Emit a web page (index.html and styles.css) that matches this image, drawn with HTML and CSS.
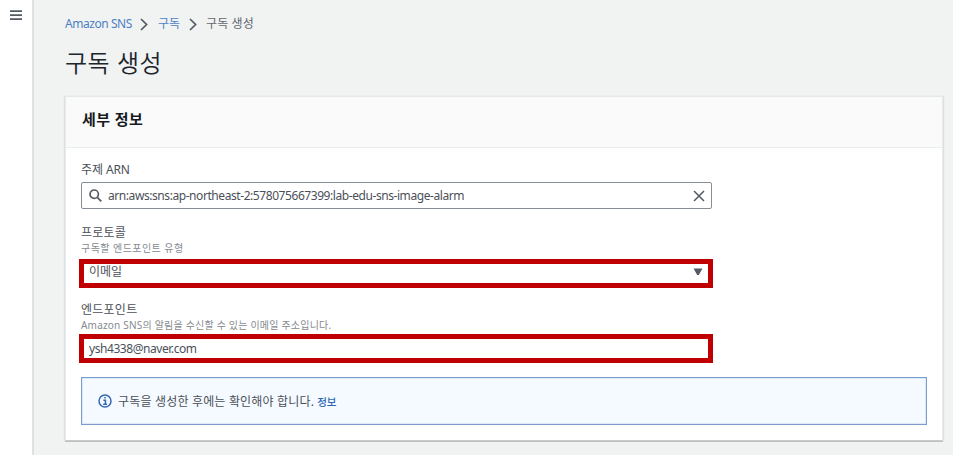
FILE: index.html
```html
<!DOCTYPE html>
<html lang="ko">
<head>
<meta charset="utf-8">
<title>구독 생성</title>
<link rel="stylesheet" href="styles.css">
</head>
<body>
<div class="app">
  <aside class="rail">
    <svg class="menu" width="12" height="11" viewBox="0 0 12 11"><path d="M0 1.1h12M0 5.1h12M0 9.1h12"/></svg>
  </aside>
  <main class="content">
    <nav class="crumbs">
      <a class="crumb crumb-root">Amazon SNS</a>
      <svg class="chevron" width="8" height="13" viewBox="0 0 8 13"><path d="M1 1l5.6 5.5L1 12"/></svg>
      <a class="crumb crumb-parent">구독</a>
      <svg class="chevron" width="8" height="13" viewBox="0 0 8 13"><path d="M1 1l5.6 5.5L1 12"/></svg>
      <span class="crumb crumb-current">구독 생성</span>
    </nav>
    <h1 class="title">구독 생성</h1>
    <section class="panel">
      <header class="panel-head"><h2>세부 정보</h2></header>
      <div class="panel-body">
        <div class="field field-arn">
          <label class="label label-arn">주제 ARN</label>
          <div class="search">
            <svg class="glass" width="13" height="13" viewBox="0 0 13 13"><circle cx="5.2" cy="5.2" r="4.2"/><path d="M8.3 8.3l4 4"/></svg>
            <span class="arn">arn:aws:sns:ap-northeast-2:578075667399:lab-edu-sns-image-alarm</span>
            <svg class="clear" width="12" height="12" viewBox="0 0 12 12"><path d="M1 1l10 10M11 1L1 11"/></svg>
          </div>
        </div>
        <div class="field field-protocol">
          <label class="label label-protocol">프로토콜</label>
          <div class="hint hint-protocol">구독할 엔드포인트 유형</div>
          <div class="marked marked-select">
            <span class="selected">이메일</span>
            <svg class="caret" width="10" height="8" viewBox="0 0 10 8"><path d="M.5.5h9L5.8 7H4.2z"/></svg>
          </div>
        </div>
        <div class="field field-endpoint">
          <label class="label label-endpoint">엔드포인트</label>
          <div class="hint hint-endpoint">Amazon SNS의 알림을 수신할 수 있는 이메일 주소입니다.</div>
          <div class="marked"><span class="email">ysh4338@naver.com</span></div>
        </div>
        <div class="alert">
          <svg class="info" width="14" height="14" viewBox="0 0 14 14"><circle cx="7" cy="7" r="6"/><path d="M5.4 6.2h2v3.9M5.2 10.2h3.8M6.3 3.7h1.5"/></svg>
          <span class="alert-text">구독을 생성한 후에는 확인해야 합니다.</span>
          <a class="alert-link">정보</a>
        </div>
      </div>
    </section>
  </main>
</div>
</body>
</html>
```
FILE: styles.css
```css
* { box-sizing: border-box; }
body {
  margin: 0;
  background: #f1f3f3;
  color: #4b5058;
  font-family: "Noto Sans", "Noto Sans CJK KR", sans-serif;
  font-size: 12px;
}
svg { display: block; flex: none; fill: none; stroke: #545b64; }
h1, h2 { margin: 0; }
.app { display: flex; height: 455px; overflow: hidden; }
.rail {
  width: 34px;
  flex: none;
  padding: 10px 0 0 10px;
  background: #fff;
  border-right: 2px solid #dfe2e2;
}
.menu { stroke-width: 1.8; }
.content { flex: 1; padding: 14px 10px 0 31px; }
.crumbs { display: flex; align-items: center; height: 20px; white-space: nowrap; }
.crumb { line-height: 20px; flex: none; }
.crumb-root { width: 75px; color: #4d7fc4; letter-spacing: -.45px; }
.crumb-parent { width: 31px; color: #4d7fc4; }
.crumb-current { color: #62676f; letter-spacing: .1px; }
.chevron { margin-right: 10px; stroke-width: 1.7; }
.crumb-parent + .chevron { margin-right: 9px; }
.title {
  height: 62px;
  padding-top: 11px;
  color: #20252c;
  font-size: 24px;
  font-weight: 350;
  letter-spacing: .5px;
  line-height: 36px;
}
.panel {
  height: 345px;
  background: #fff;
  border: 1px solid #e6e9e9;
  border-bottom-color: #c7cbcb;
  box-shadow: 1px 0 1px #dfe2e2, -1px 0 1px #dfe2e2, 0 1px 0 #aeb3b3;
}
.panel-head {
  height: 51px;
  padding: 10px 16px;
  background: #fafafa;
  border-bottom: 1px solid #eaeded;
}
.panel-head h2 { color: #16191f; font-size: 15px; font-weight: 700; letter-spacing: .4px; line-height: 24px; }
.panel-body { padding: 13px 15px 0; }
.field { width: 631px; white-space: nowrap; }
.field-arn { height: 62px; }
.field-protocol { height: 77px; }
.field-endpoint { height: 77px; }
.label { display: block; height: 18px; line-height: 18px; }
.label-arn { letter-spacing: -.1px; }
.label-protocol, .label-endpoint { padding-top: 1px; letter-spacing: .25px; }
.hint { height: 14px; color: #858a90; font-size: 10px; line-height: 14px; }
.hint-protocol { letter-spacing: .45px; }
.hint-endpoint { letter-spacing: .2px; }
.search {
  display: flex;
  align-items: center;
  height: 27px;
  margin-top: 3px;
  padding: 0 6px 0 7px;
  border: 1px solid #878d94;
  border-radius: 2px;
}
.glass { stroke-width: 1.7; }
.arn { flex: 1; margin-left: 6px; letter-spacing: -.43px; line-height: 24px; }
.clear { stroke-width: 1.5; }
.marked {
  display: flex;
  align-items: center;
  width: 634px;
  height: 29px;
  margin: 2px 0 0 -2px;
  padding: 0 5px;
  border: 5px solid #c00000;
}
.marked-select { justify-content: space-between; align-items: flex-start; margin-top: 4px; }
.selected { line-height: 15px; }
.email { letter-spacing: -.44px; }
.caret { margin-top: 4px; fill: #545b64; stroke: none; }
.alert {
  display: flex;
  align-items: center;
  height: 48px;
  padding: 0 16px;
  background: #f4faff;
  border: 1px solid #7c9dcb;
  box-shadow: inset 0 0 0 1px #dce8f5;
  white-space: nowrap;
}
.info { stroke: #3467b5; stroke-width: 1.5; }
.alert-text { margin-left: 6px; letter-spacing: .18px; }
.alert-link { margin-left: 3px; color: #2f67b5; font-size: 10.5px; font-weight: 500; }
```
